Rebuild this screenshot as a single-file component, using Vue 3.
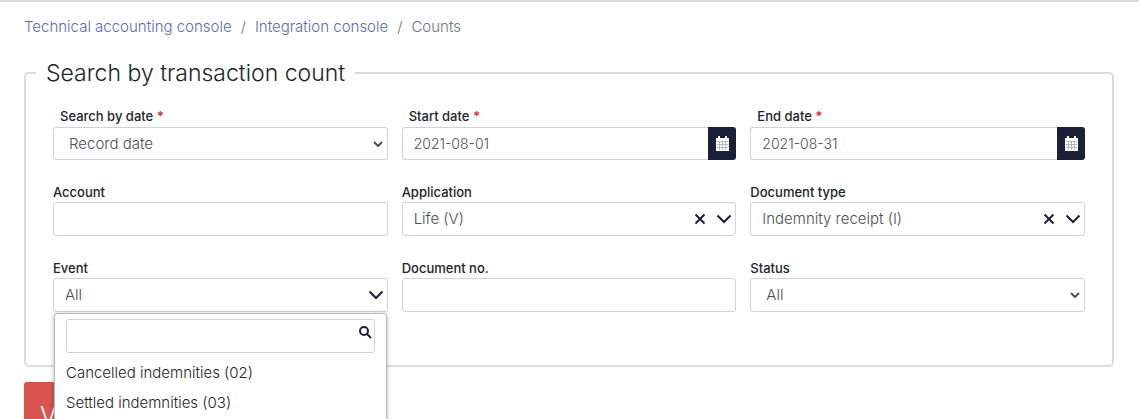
<script setup>
import { ref } from 'vue'

const searchBy = ref('record')
const startDate = ref('2021-08-01')
const endDate = ref('2021-08-31')
const account = ref('')
const application = ref('Life (V)')
const documentType = ref('Indemnity receipt (I)')
const event = ref('All')
const documentNo = ref('')
const status = ref('all')
const eventOpen = ref(true)
const eventFilter = ref('')
const eventOptions = ['Cancelled indemnities (02)', 'Settled indemnities (03)']

function pickEvent(option) {
  event.value = option
  eventOpen.value = false
}
</script>

<template>
  <main class="page">
    <nav class="breadcrumb" aria-label="Breadcrumb">
      <a href="#">Technical accounting console</a>
      <span>/</span>
      <a href="#">Integration console</a>
      <span>/</span>
      <span aria-current="page">Counts</span>
    </nav>

    <form class="form" @submit.prevent>
      <fieldset class="panel">
        <legend>Search by transaction count</legend>
        <div class="grid">
          <div class="field">
            <label class="required" for="search-by">Search by date <b>*</b></label>
            <div class="select">
              <select id="search-by" v-model="searchBy">
                <option value="record">Record date</option>
              </select>
              <svg width="10" height="6" viewBox="0 0 10 6"><path d="M1 1l4 4 4-4" /></svg>
            </div>
          </div>

          <div class="field">
            <label class="required" for="start-date">Start date <b>*</b></label>
            <div class="date">
              <input id="start-date" v-model="startDate" class="control" type="text" />
              <button type="button" aria-label="Choose start date">
                <svg width="14" height="15" viewBox="0 0 14 15">
                  <path class="sheet" d="M1 2h13v13H1z" />
                  <path class="rings" d="M4 0v3M11 0v3" />
                  <path class="cells" d="M2 5.500h11M2 8.500h11M2 11.500h11M4.500 5v9M7.500 5v9M10.500 5v9" />
                </svg>
              </button>
            </div>
          </div>

          <div class="field">
            <label class="required" for="end-date">End date <b>*</b></label>
            <div class="date">
              <input id="end-date" v-model="endDate" class="control" type="text" />
              <button type="button" aria-label="Choose end date">
                <svg width="14" height="15" viewBox="0 0 14 15">
                  <path class="sheet" d="M1 2h13v13H1z" />
                  <path class="rings" d="M4 0v3M11 0v3" />
                  <path class="cells" d="M2 5.500h11M2 8.500h11M2 11.500h11M4.500 5v9M7.500 5v9M10.500 5v9" />
                </svg>
              </button>
            </div>
          </div>

          <div class="field">
            <label for="account">Account</label>
            <input id="account" v-model="account" class="control" type="text" />
          </div>

          <div class="field">
            <label for="application">Application</label>
            <div class="combo">
              <button id="application" class="value" type="button" aria-haspopup="listbox">
                <span>{{ application }}</span>
                <svg width="16" height="10" viewBox="0 0 16 10"><path d="M1.500 1.500L8 8l6.500-6.500" /></svg>
              </button>
              <button class="clear" type="button" aria-label="Clear application" @click="application = ''">
                <svg width="12" height="12" viewBox="0 0 12 12"><path d="M1.500 1.500l9 9M10.500 1.500l-9 9" /></svg>
              </button>
            </div>
          </div>

          <div class="field">
            <label for="document-type">Document type</label>
            <div class="combo">
              <button id="document-type" class="value" type="button" aria-haspopup="listbox">
                <span>{{ documentType }}</span>
                <svg width="16" height="10" viewBox="0 0 16 10"><path d="M1.500 1.500L8 8l6.500-6.500" /></svg>
              </button>
              <button class="clear" type="button" aria-label="Clear document type" @click="documentType = ''">
                <svg width="12" height="12" viewBox="0 0 12 12"><path d="M1.500 1.500l9 9M10.500 1.500l-9 9" /></svg>
              </button>
            </div>
          </div>

          <div class="field">
            <label for="event">Event</label>
            <div class="combo">
              <button id="event" class="value" type="button" aria-haspopup="listbox" :aria-expanded="eventOpen" @click="eventOpen = !eventOpen">
                <span>{{ event }}</span>
                <svg width="16" height="10" viewBox="0 0 16 10"><path d="M1.500 1.500L8 8l6.500-6.500" /></svg>
              </button>
              <div v-if="eventOpen" class="menu">
                <div class="filter">
                  <input v-model="eventFilter" class="control" type="text" aria-label="Filter events" />
                  <svg width="13" height="13" viewBox="0 0 13 13"><circle cx="5" cy="5" r="4" /><path d="M8 8l4 4" /></svg>
                </div>
                <ul role="listbox" aria-label="Event">
                  <li v-for="option in eventOptions" :key="option" role="option" @click="pickEvent(option)">{{ option }}</li>
                </ul>
              </div>
            </div>
          </div>

          <div class="field">
            <label for="document-no">Document no.</label>
            <input id="document-no" v-model="documentNo" class="control" type="text" />
          </div>

          <div class="field">
            <label for="status">Status</label>
            <div class="select">
              <select id="status" v-model="status">
                <option value="all">All</option>
              </select>
              <svg width="10" height="6" viewBox="0 0 10 6"><path d="M1 1l4 4 4-4" /></svg>
            </div>
          </div>
        </div>
      </fieldset>

      <button class="submit" type="submit">V</button>
    </form>
  </main>
</template>

<style>
body {
  overflow: hidden;
  background: #fff;
}
</style>

<style scoped>
.page,
.page * {
  box-sizing: border-box;
}

.page {
  border-top: 2px solid #ddd;
  padding: 14px 25px 0 24px;
  color: #212529;
  font-family: Inter, "Open Sans", sans-serif;
  font-size: 15px;
  font-weight: 300;
  line-height: 22px;
}

button,
input,
select {
  margin: 0;
  font: inherit;
}

svg {
  display: block;
  flex: none;
  fill: none;
  stroke: #1a2035;
  stroke-width: 2;
}

.breadcrumb {
  display: flex;
  gap: 9px;
  color: #6c757d;
}

.breadcrumb a {
  color: #5c6bb5;
  text-decoration: none;
}

.form {
  margin-top: 20px;
}

.panel {
  min-width: 0;
  margin: 0;
  border: 2px solid #ddd;
  border-radius: 5px;
  padding: 18px 27px 53px;
}

.panel legend {
  margin-left: -17px;
  padding: 0 10px;
  font-size: 23px;
  line-height: 30px;
}

.grid {
  display: grid;
  grid-template-columns: repeat(3, minmax(0, 1fr));
  gap: 22px 14px;
}

.field {
  display: flex;
  flex-direction: column;
}

.field label {
  font-size: 13px;
  font-weight: 500;
  line-height: 20px;
}

.field label.required {
  padding: 0 7px;
  line-height: 21px;
}

.field label b {
  color: #dc3545;
}

.control,
.select select,
.combo .value {
  width: 100%;
  min-width: 0;
  min-height: 33px;
  flex: 1;
  border: 1px solid #ced4da;
  border-radius: 3px;
  padding: 0 11px;
  background: #fff;
  color: #495057;
  outline: 0;
}

.select {
  display: grid;
  flex: 1;
  align-items: center;
}

.select select,
.select svg {
  grid-area: 1 / 1;
}

.select select {
  height: 100%;
  padding: 0 15px;
  appearance: none;
}

.select svg {
  justify-self: end;
  margin-right: 5px;
  stroke: #495057;
  pointer-events: none;
}

.date {
  display: flex;
}

.date .control {
  border-right: 0;
  border-radius: 3px 0 0 3px;
  font-size: 14px;
}

.date button {
  display: grid;
  place-items: center;
  width: 28px;
  border: 0;
  border-radius: 0 3px 3px 0;
  padding: 0;
  background: #1a2035;
}

.date .sheet {
  fill: #fff;
  stroke: none;
}

.date .rings {
  stroke: #fff;
}

.date .cells {
  stroke: #b4b8c4;
  stroke-width: 1;
}

.combo {
  position: relative;
  display: flex;
}

.combo .value {
  display: flex;
  align-items: center;
  justify-content: space-between;
  min-height: 34px;
  padding-right: 3px;
}

.combo .clear {
  position: absolute;
  top: 11px;
  right: 30px;
  border: 0;
  padding: 0;
  background: none;
}

.menu {
  position: absolute;
  top: 100%;
  right: 1px;
  left: 1px;
  margin-top: 1px;
  border: 1px solid #bbb;
  border-radius: 3px;
  padding: 5px 11px;
  background: #fff;
  box-shadow: 0 1px 4px rgba(0, 0, 0, 0.3);
}

.filter {
  display: grid;
}

.filter .control {
  grid-area: 1 / 1;
  height: 34px;
}

.filter svg {
  grid-area: 1 / 1;
  justify-self: end;
  margin: 7px 3px;
}

.menu ul {
  height: 120px;
  margin: 5px 0 0;
  padding: 0;
  list-style: none;
}

.menu li {
  line-height: 30px;
}

.submit {
  margin-top: 15px;
  border: 0;
  border-radius: 3px;
  padding: 16px;
  min-width: 96px;
  background: #d9534f;
  color: #fff;
  font-size: 25px;
  line-height: 36px;
  text-align: left;
}
</style>
